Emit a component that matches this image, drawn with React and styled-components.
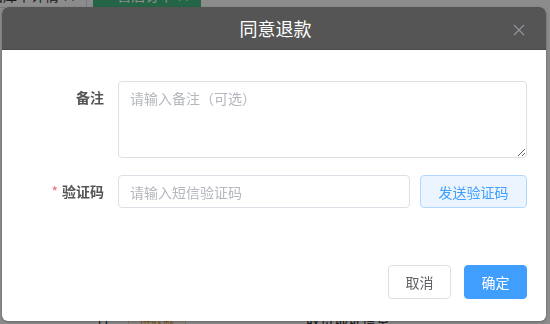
import React, { useState } from "react";
import styled, { createGlobalStyle } from "styled-components";

const GlobalStyle = createGlobalStyle`
    html, body {
        margin: 0;
        padding: 0;
        background: #fff;
        font-family: "Noto Sans CJK SC", "Noto Sans", sans-serif;
    }
    * {
        box-sizing: border-box;
    }
`

const App = () => {
    const [remark, setRemark] = useState('');
    const [code, setCode] = useState('');

    return (
        <>
            <GlobalStyle />
            <Page>
                <TabBar>
                    <Tab>出库单详情 ×</Tab>
                    <Tab active><Dot />售后订单 ×</Tab>
                </TabBar>
                <PageBody />
                <InfoRow>
                    <InfoText>订</InfoText>
                    <StatusTag>待收款</StatusTag>
                    <InfoText ml={'120px'}>收货地址信息：</InfoText>
                </InfoRow>
            </Page>
            <Mask>
                <Dialog>
                    <DialogHeader>
                        <DialogTitle>同意退款</DialogTitle>
                        <CloseBtn>
                            <svg width="12" height="12" viewBox="0 0 12 12">
                                <path d="M1 1 L11 11 M11 1 L1 11" stroke="#909399" strokeWidth="1.2" fill="none" />
                            </svg>
                        </CloseBtn>
                    </DialogHeader>
                    <DialogBody>
                        <FormItem mb={'17px'}>
                            <Label>备注</Label>
                            <TextArea placeholder="请输入备注（可选）" value={remark} onChange={(e) => setRemark(e.target.value)} />
                        </FormItem>
                        <FormItem>
                            <Label><Star>*</Star>验证码</Label>
                            <Input placeholder="请输入短信验证码" value={code} onChange={(e) => setCode(e.target.value)} />
                            <SendBtn>发送验证码</SendBtn>
                        </FormItem>
                    </DialogBody>
                    <DialogFooter>
                        <Button>取消</Button>
                        <Button primary>确定</Button>
                    </DialogFooter>
                </Dialog>
            </Mask>
        </>
    );
}

const Page = styled.div`
    display: flex;
    flex-direction: column;
    width: 550px;
    height: 324px;
    overflow: hidden;
    background: #fff;
`
const TabBar = styled.div`
    display: flex;
    height: 26px;
    margin-top: -18px;
    margin-left: -22px;
    gap: 6px;
`
const Tab = styled.div`
    display: flex;
    align-items: center;
    gap: 5px;
    padding: 0 10px;
    height: 26px;
    font-size: 14px;
    color: ${props => props.active ? '#fff' : '#333'};
    background: ${props => props.active ? '#42b983' : '#fff'};
    border: 1px solid ${props => props.active ? '#42b983' : '#d8dce5'};
`
const Dot = styled.span`
    width: 8px;
    height: 8px;
    border-radius: 50%;
    background: #fff;
`
const PageBody = styled.div`
    flex: 1;
`
const InfoRow = styled.div`
    display: flex;
    align-items: flex-start;
    height: 10px;
    padding-left: 96px;
    font-size: 14px;
    color: #222;
`
const InfoText = styled.span`
    margin-left: ${props => props.ml || '0'};
    margin-top: -4px;
`
const StatusTag = styled.span`
    margin-left: 18px;
    padding: 0 10px;
    margin-top: -4px;
    color: #e6a23c;
    background: #fdf6ec;
    border: 1px solid #f5dab1;
    font-size: 12px;
`
const Mask = styled.div`
    position: fixed;
    inset: 0;
    display: flex;
    justify-content: center;
    align-items: flex-start;
    padding-top: 7px;
    background: rgba(0, 0, 0, 0.45);
`
const Dialog = styled.div`
    display: flex;
    flex-direction: column;
    width: 544px;
    height: 314px;
    margin-left: -2px;
    background: #fff;
    border-radius: 6px;
    overflow: hidden;
    box-shadow: 0 1px 3px rgba(0, 0, 0, 0.3);
`
const DialogHeader = styled.div`
    display: flex;
    align-items: center;
    justify-content: center;
    position: relative;
    height: 43px;
    background: #555555;
    border-bottom: 1px solid #4a4a4a;
`
const DialogTitle = styled.div`
    font-size: 18px;
    color: #fff;
    line-height: 24px;
    margin-left: 3px;
`
const CloseBtn = styled.div`
    position: absolute;
    right: 21px;
    top: 17px;
    display: flex;
    cursor: pointer;
`
const DialogBody = styled.div`
    display: flex;
    flex-direction: column;
    padding: 31px 19px 0 20px;
    flex: 1;
`
const FormItem = styled.div`
    display: flex;
    align-items: flex-start;
    margin-bottom: ${props => props.mb || '0'};
`
const Label = styled.label`
    display: flex;
    justify-content: flex-end;
    align-items: center;
    width: 96px;
    height: 32px;
    padding-right: 14px;
    font-size: 14px;
    font-weight: 600;
    color: #555;
`
const Star = styled.span`
    color: #f56c6c;
    margin-right: 4px;
    font-weight: 400;
`
const TextArea = styled.textarea`
    flex: 1;
    height: 77px;
    padding: 5px 11px;
    border: 1px solid #dcdfe6;
    border-radius: 4px;
    font-family: "Noto Sans CJK SC", "Noto Sans", sans-serif;
    font-size: 14px;
    line-height: 22px;
    color: #606266;
    outline: none;
    &::placeholder {
        color: #b4b7be;
    }
`
const Input = styled.input`
    width: 292px;
    height: 33px;
    padding: 0 11px;
    border: 1px solid #dcdfe6;
    border-radius: 4px;
    font-family: "Noto Sans CJK SC", "Noto Sans", sans-serif;
    font-size: 14px;
    color: #606266;
    outline: none;
    &::placeholder {
        color: #b4b7be;
    }
`
const SendBtn = styled.button`
    margin-left: 10px;
    width: 107px;
    height: 33px;
    border: 1px solid #b3d8ff;
    border-radius: 4px;
    background: #ecf5ff;
    color: #409eff;
    font-family: "Noto Sans CJK SC", "Noto Sans", sans-serif;
    font-size: 14px;
    cursor: pointer;
`
const DialogFooter = styled.div`
    display: flex;
    justify-content: flex-end;
    gap: 13px;
    padding: 0 19px 22px 0;
`
const Button = styled.button`
    width: 63px;
    height: 34px;
    border-radius: 4px;
    border: 1px solid ${props => props.primary ? '#409eff' : '#dcdfe6'};
    background: ${props => props.primary ? '#409eff' : '#fff'};
    color: ${props => props.primary ? '#fff' : '#606266'};
    font-family: "Noto Sans CJK SC", "Noto Sans", sans-serif;
    font-size: 14px;
    cursor: pointer;
`

export default App;
